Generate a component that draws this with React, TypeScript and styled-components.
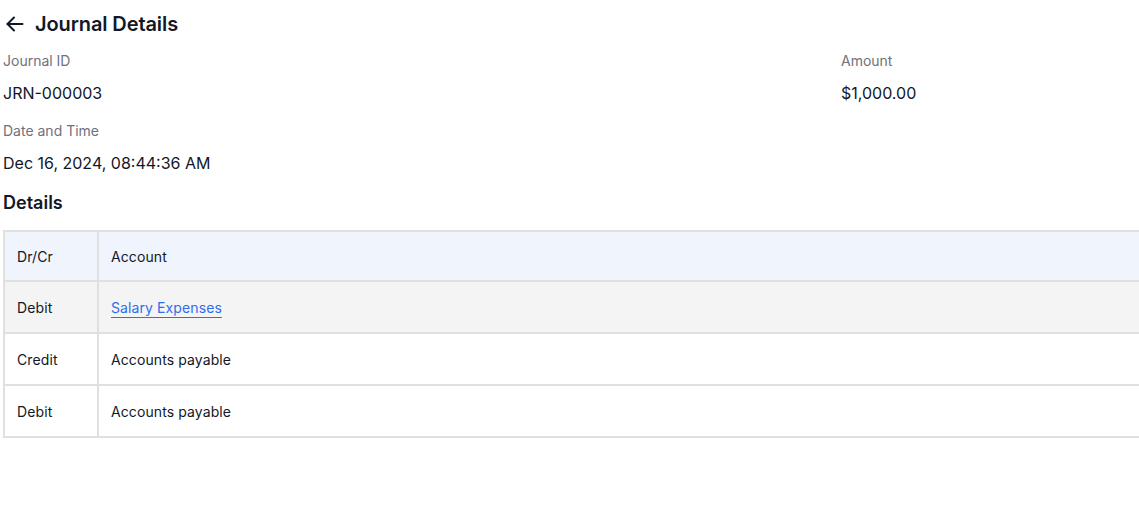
import styled, { createGlobalStyle } from 'styled-components'

const GlobalStyle = createGlobalStyle`
  html, body {
    margin: 0;
    padding: 0;
    background: #ffffff;
  }
  body {
    font-family: Inter, 'Noto Sans', 'Liberation Sans', sans-serif;
    color: #111827;
    overflow: hidden;
  }
`

const Page = styled.div`
  width: 100vw;
  overflow: hidden;
  padding: 10px 0 0 3px;
  box-sizing: border-box;
`

const Header = styled.div`
  display: flex;
  align-items: center;
  gap: 11px;
  height: 28px;
  padding-left: 3px;
`

const BackButton = styled.button`
  display: flex;
  align-items: center;
  justify-content: center;
  background: none;
  border: none;
  padding: 0;
  cursor: pointer;
  color: #111827;
`

const Title = styled.h1`
  margin: 0;
  font-size: 20px;
  font-weight: 600;
  line-height: 28px;
  letter-spacing: -0.1px;
`

const InfoGrid = styled.div`
  display: grid;
  grid-template-columns: 838px 1fr;
  row-gap: 16px;
  margin-top: 13px;
`

const Field = styled.div`
  display: flex;
  flex-direction: column;
  gap: 10px;
`

const Label = styled.span`
  font-size: 14px;
  line-height: 20px;
  color: #71717a;
`

const Value = styled.span`
  font-size: 16px;
  line-height: 24px;
  color: #111827;
`

const SectionTitle = styled.h2`
  margin: 16px 0 15px;
  font-size: 18px;
  font-weight: 600;
  line-height: 24px;
`

const Table = styled.table`
  width: 1200px;
  border-collapse: collapse;
  border: 2px solid #e0e0e0;
  font-size: 14px;
  letter-spacing: 0.1px;
`

const HeadRow = styled.tr`
  background: #eff4fd;
`

const Row = styled.tr<{ shaded?: boolean }>`
  background: ${({ shaded }) => (shaded ? '#f4f4f4' : '#ffffff')};
`

const Cell = styled.td<{ narrow?: boolean; head?: boolean }>`
  height: ${({ head }) => (head ? '48px' : '50px')};
  padding: 0 12px;
  border: 2px solid #e0e0e0;
  width: ${({ narrow }) => (narrow ? '68px' : 'auto')};
  color: #111827;
  text-align: left;
  font-weight: 400;
`

const HeadCell = styled(Cell).attrs({ as: 'th', head: true })`
  font-weight: 400;
`

const AccountLink = styled.a`
  color: #2f6fed;
  text-decoration: underline;
  text-underline-offset: 4px;
  text-decoration-thickness: 1px;
`

const ArrowLeft = () => (
  <svg width="18" height="18" viewBox="0 0 18 18" fill="none" stroke="currentColor" strokeWidth="2" strokeLinecap="round" strokeLinejoin="round">
    <path d="M16.5 9H1.5" />
    <path d="M8 2.5L1.5 9L8 15.5" />
  </svg>
)

const rows = [
  { side: 'Debit', account: 'Salary Expenses', link: true },
  { side: 'Credit', account: 'Accounts payable', link: false },
  { side: 'Debit', account: 'Accounts payable', link: false },
]

export default function App() {
  return (
    <>
      <GlobalStyle />
      <Page>
        <Header>
          <BackButton aria-label="Back">
            <ArrowLeft />
          </BackButton>
          <Title>Journal Details</Title>
        </Header>
        <InfoGrid>
          <Field>
            <Label>Journal ID</Label>
            <Value>JRN-000003</Value>
          </Field>
          <Field>
            <Label>Amount</Label>
            <Value>$1,000.00</Value>
          </Field>
          <Field>
            <Label>Date and Time</Label>
            <Value>Dec 16, 2024, 08:44:36 AM</Value>
          </Field>
        </InfoGrid>
        <SectionTitle>Details</SectionTitle>
        <Table>
          <thead>
            <HeadRow>
              <HeadCell narrow>Dr/Cr</HeadCell>
              <HeadCell>Account</HeadCell>
            </HeadRow>
          </thead>
          <tbody>
            {rows.map((r, i) => (
              <Row key={i} shaded={r.link}>
                <Cell narrow>{r.side}</Cell>
                <Cell>
                  {r.link ? <AccountLink href="#">{r.account}</AccountLink> : r.account}
                </Cell>
              </Row>
            ))}
          </tbody>
        </Table>
      </Page>
    </>
  )
}
